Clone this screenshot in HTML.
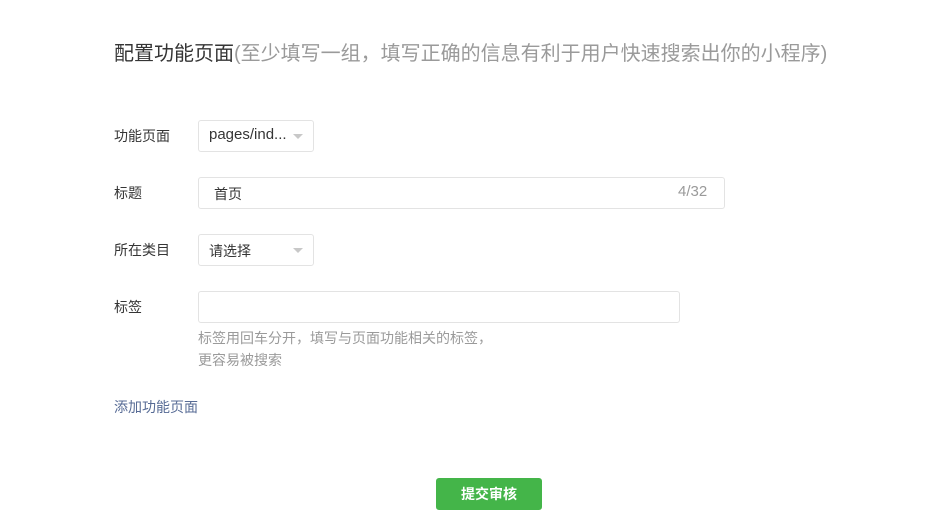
<!DOCTYPE html>
<html><head><meta charset="utf-8"><style>
body{margin:0;width:944px;height:532px;background:#fff;font-family:"Liberation Sans","Noto Sans CJK SC",sans-serif;position:relative;overflow:hidden}
.a{position:absolute;white-space:nowrap}
.lbl{font-size:14px;color:#353535}
.box{position:absolute;border:1px solid #e3e3e3;border-radius:3px;box-sizing:border-box;background:#fff}
.tri{position:absolute;width:0;height:0;border-left:5px solid transparent;border-right:5px solid transparent;border-top:5px solid #c8c8c8}
</style></head><body>
<div class="a" style="left:114px;top:37px;font-size:20px;color:#353535">配置功能页面<span style="color:#9a9a9a">(至少填写一组，填写正确的信息有利于用户快速搜索出你的小程序)</span></div>

<div class="a lbl" style="left:114px;top:126px">功能页面</div>
<div class="box" style="left:198px;top:120px;width:116px;height:32px"></div>
<div class="a" style="left:209px;top:126px;font-size:15px;color:#353535">pages/ind...</div>
<div class="tri" style="left:293px;top:134px"></div>

<div class="a lbl" style="left:114px;top:183px">标题</div>
<div class="box" style="left:198px;top:177px;width:527px;height:32px"></div>
<div class="a" style="left:214px;top:184px;font-size:14px;color:#353535">首页</div>
<div class="a" style="left:678px;top:183px;font-size:15px;color:#9a9a9a">4/32</div>

<div class="a lbl" style="left:114px;top:240px">所在类目</div>
<div class="box" style="left:198px;top:234px;width:116px;height:32px"></div>
<div class="a" style="left:209px;top:241px;font-size:14px;color:#353535">请选择</div>
<div class="tri" style="left:293px;top:248px"></div>

<div class="a lbl" style="left:114px;top:297px">标签</div>
<div class="box" style="left:198px;top:291px;width:482px;height:32px"></div>
<div class="a" style="left:198px;top:327px;font-size:14px;color:#9a9a9a;line-height:22px">标签用回车分开，填写与页面功能相关的标签，<br>更容易被搜索</div>

<div class="a" style="left:114px;top:397px;font-size:14px;color:#576b95">添加功能页面</div>

<div class="a" style="left:436px;top:478px;width:106px;height:32px;background:#44b549;border-radius:3px;color:#fff;font-size:14px;font-weight:bold;text-align:center;line-height:32px">提交审核</div>
</body></html>
